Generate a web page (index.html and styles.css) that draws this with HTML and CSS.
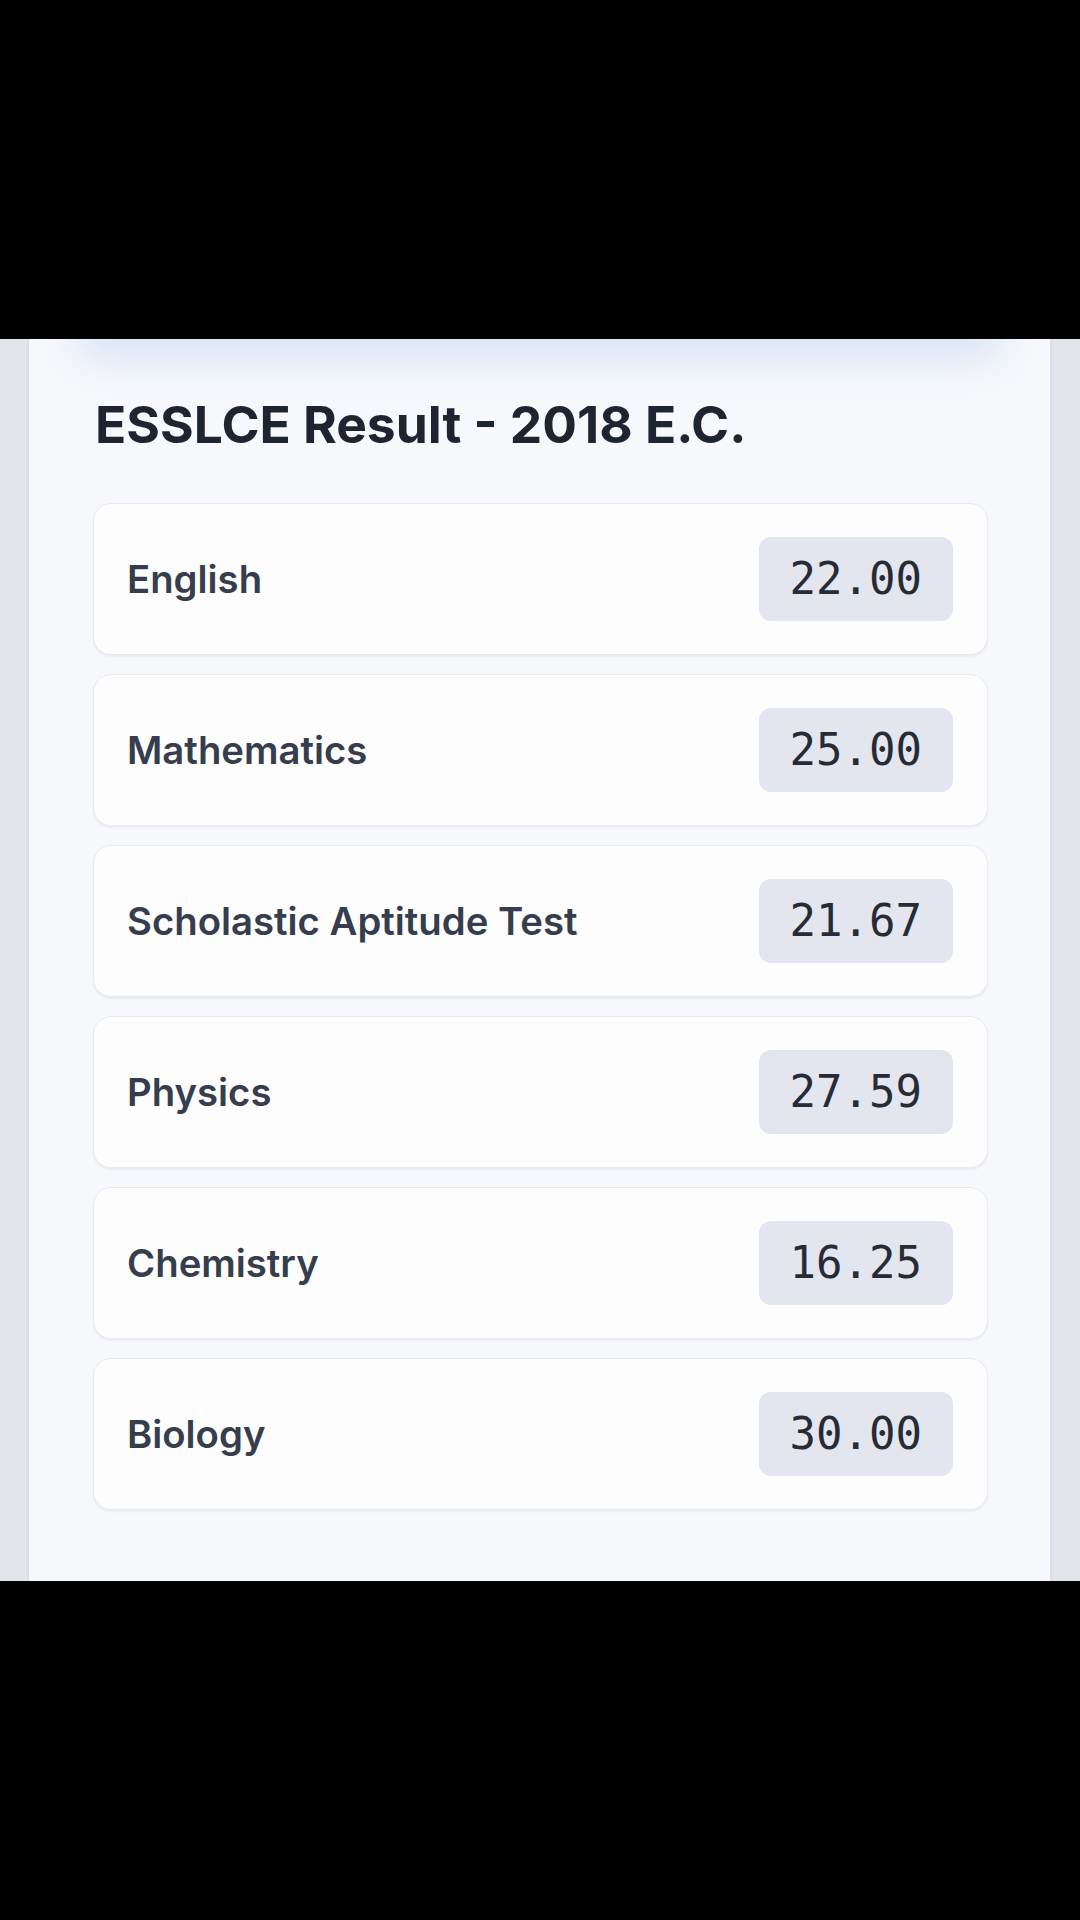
FILE: index.html
```html
<!DOCTYPE html>
<html lang="en">
<head>
    <meta charset="UTF-8">
    <meta name="viewport" content="width=device-width, initial-scale=1.0">
    <title>ESSLCE Result</title>
    <link rel="stylesheet" href="styles.css">
</head>
<body>

    <!-- Screen area between the black bars -->
    <div class="screen">
        <div class="panel">
            <h1 class="title">ESSLCE Result - 2018 E.C.</h1>

            <ul class="subjects">
                <li class="subject">
                    <span class="name">English</span>
                    <span class="score">22.00</span>
                </li>
                <li class="subject">
                    <span class="name">Mathematics</span>
                    <span class="score">25.00</span>
                </li>
                <li class="subject">
                    <span class="name">Scholastic Aptitude Test</span>
                    <span class="score">21.67</span>
                </li>
                <li class="subject">
                    <span class="name">Physics</span>
                    <span class="score">27.59</span>
                </li>
                <li class="subject">
                    <span class="name">Chemistry</span>
                    <span class="score">16.25</span>
                </li>
                <li class="subject">
                    <span class="name">Biology</span>
                    <span class="score">30.00</span>
                </li>
            </ul>
        </div>
    </div>

</body>
</html>
```

FILE: styles.css
```css
  body {
      margin: 0;
      padding: 0;
      background-color: #000;
      height: 1920px;
      font-family: Inter, "Noto Sans", sans-serif;
      overflow: hidden;
  }

  /* the visible part of the page */
  .screen {
      margin-top: 339px;
      height: 1242px;
      background-color: #e4e4ec;
      padding: 0 30px 0 29px;
      display: flex;
  }

  .panel {
      flex: 1;
      position: relative;
      overflow: hidden;
      background-color: #f7f8fb;
      box-shadow: 0 0 4px rgba(60, 60, 90, 0.12);
      padding: 55px 62px 0 64px;
  }

  .panel::before {
      content: "";
      position: absolute;
      top: -40px;
      left: 60px;
      right: 60px;
      height: 40px;
      box-shadow: 0 10px 40px 10px rgba(120, 165, 235, 0.24);
  }

  .title {
      margin: 0 0 49px 2px;
      font-size: 51.5px;
      line-height: 60px;
      font-weight: 700;
      color: #1e2430;
  }

  .subjects {
      list-style: none;
      margin: 0;
      padding: 0;
      display: flex;
      flex-direction: column;
      gap: 19px;
  }

  .subject {
      display: flex;
      justify-content: space-between;
      align-items: center;
      padding: 33px 34px 33px 33px;
      background-color: #fdfdfe;
      border: 1px solid #e8eaf0;
      border-radius: 18px;
      box-shadow: 0 2px 2px rgba(40, 50, 80, 0.06);
  }

  .name {
      font-size: 38.3px;
      font-weight: 600;
      color: #363d4d;
  }

  .score {
      font-family: "DejaVu Sans Mono", "Liberation Mono", monospace;
      font-size: 44px;
      line-height: 50px;
      padding: 17px 31px;
      background-color: #e3e6ee;
      border-radius: 12px;
      color: #262b36;
  }
```
